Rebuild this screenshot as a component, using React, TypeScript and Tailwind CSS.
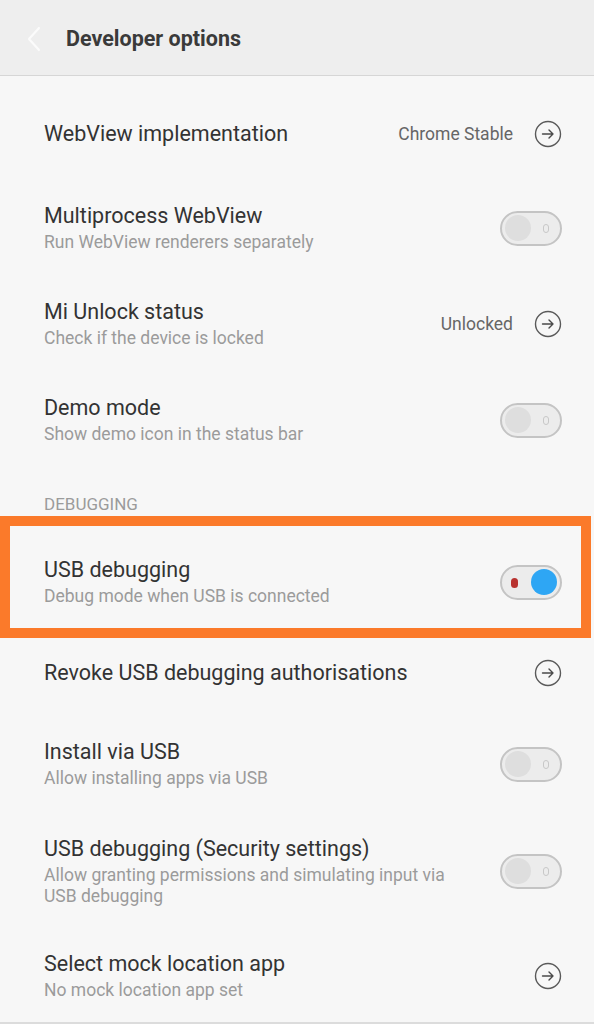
import React from 'react';

const font = { fontFamily: 'Roboto, "Noto Sans", sans-serif' };

function ArrowCircle() {
  return (
    <svg width="28" height="28" viewBox="0 0 28 28" className="shrink-0">
      <circle cx="14" cy="14" r="12.5" fill="none" stroke="#5a5a5a" strokeWidth="1.4" />
      <path d="M8.5 14h10.5M15 10l4 4-4 4" fill="none" stroke="#4a4a4a" strokeWidth="1.4" strokeLinecap="round" strokeLinejoin="round" />
    </svg>
  );
}

function Toggle({ on = false }: { on?: boolean }) {
  return (
    <div className="relative w-[62px] h-[35px] rounded-full border-2 border-[#c4c4c4] bg-[#ececec] shrink-0">
      {on ? (
        <>
          <div className="absolute left-[9px] top-[11px] w-[7px] h-[10px] rounded-full bg-[#b8322f]" />
          <div className="absolute right-[3px] top-[2.5px] w-[26px] h-[26px] rounded-full bg-[#2ea6f4]" />
        </>
      ) : (
        <>
          <div className="absolute left-[3px] top-[2.5px] w-[26px] h-[26px] rounded-full bg-[#dedede]" />
          <div className="absolute right-[11px] top-[11px] w-[6px] h-[9px] rounded-full border border-[#c8c8c8]" />
        </>
      )}
    </div>
  );
}

function Row({
  title,
  sub,
  value,
  toggle,
  on,
  className = '',
}: {
  title: string;
  sub?: string;
  value?: string;
  toggle?: boolean;
  on?: boolean;
  className?: string;
}) {
  return (
    <div className={`flex items-center pl-[44px] pr-[32px] ${className}`}>
      <div className="flex-1 min-w-0 pr-6">
        <div className="text-[21.5px] leading-[26px] text-[#333333]">{title}</div>
        {sub && (
          <div className="text-[17.5px] leading-[21px] text-[#9b9b9b] mt-[3px]">{sub}</div>
        )}
      </div>
      {value && <div className="text-[17.5px] text-[#666666] mr-[21px]">{value}</div>}
      {toggle ? <Toggle on={on} /> : <ArrowCircle />}
    </div>
  );
}

export default function App() {
  return (
    <div className="w-[594px] h-[1024px] overflow-hidden bg-[#f7f7f7]" style={font}>
      <div className="h-[76px] bg-[#eeeeee] border-b border-[#d6d6d6] flex items-center pt-[3px]">
        <svg width="14" height="26" viewBox="0 0 14 26" className="ml-[27px] mr-[25px]">
          <path d="M12 2L2 13l10 11" fill="none" stroke="#fbfbfb" strokeWidth="2.2" strokeLinecap="round" strokeLinejoin="round" />
        </svg>
        <div className="text-[21.5px] font-bold text-[#3a3a3a]">Developer options</div>
      </div>

      <Row title="WebView implementation" value="Chrome Stable" className="h-[104px] pt-[12px]" />
      <Row title="Multiprocess WebView" sub="Run WebView renderers separately" toggle className="h-[96px]" />
      <Row title="Mi Unlock status" sub="Check if the device is locked" value="Unlocked" className="h-[96px]" />
      <Row title="Demo mode" sub="Show demo icon in the status bar" toggle className="h-[96px]" />

      <div className="h-[66px] pl-[44px] pt-[26px] text-[17px] leading-[20px] text-[#9b9b9b]">DEBUGGING</div>

      <div className="relative">
        <Row title="USB debugging" sub="Debug mode when USB is connected" toggle on className="h-[96px]" />
        <div className="absolute left-0 w-[591px] top-[-18px] h-[122px] border-[10px] border-[#fb7a2a] pointer-events-none" />
      </div>

      <Row title="Revoke USB debugging authorisations" className="h-[86px]" />
      <Row title="Install via USB" sub="Allow installing apps via USB" toggle className="h-[96px]" />
      <Row
        title="USB debugging (Security settings)"
        sub="Allow granting permissions and simulating input via USB debugging"
        toggle
        className="h-[118px]"
      />
      <Row
        title="Select mock location app"
        sub="No mock location app set"
        className="h-[94px] border-b-2 border-[#dcdcdc]"
      />
    </div>
  );
}
